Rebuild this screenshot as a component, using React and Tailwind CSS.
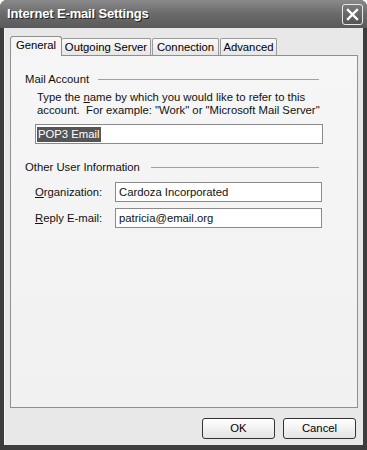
export default function App() {
  const font = { fontFamily: '"Liberation Sans", Arial, sans-serif' };
  return (
    <div className="w-[367px] h-[450px] bg-white" style={font}>
      <div className="w-[367px] h-[450px] flex flex-col bg-[#3d3d3d] rounded-t-[7px] overflow-hidden">
        {/* title bar */}
        <div className="h-[28px] flex items-center justify-between pl-[7px] pr-[4px] bg-gradient-to-b from-[#8a8a8a] via-[#6a6a6a] to-[#5a5a5a] shrink-0">
          <span className="text-white font-bold text-[13px] tracking-[-0.15px] [text-shadow:1px_1px_0_#222]">
            Internet E-mail Settings
          </span>
          <div className="w-[21px] h-[21px] rounded-[3px] border border-[#e8e8e8] bg-gradient-to-b from-[#7a7a7a] to-[#555] flex items-center justify-center">
            <svg width="13" height="13" viewBox="0 0 13 13">
              <path d="M2 2 L11 11 M11 2 L2 11" stroke="white" strokeWidth="2.4" strokeLinecap="square" />
            </svg>
          </div>
        </div>
        {/* body */}
        <div className="flex-1 mx-[4px] mb-[5px] bg-[#e8e8e8] border-l border-[#f4f4f4] flex flex-col px-[5px] pt-[8px]">
          {/* tabs */}
          <div className="flex items-end h-[19px] text-[11.3px] text-black relative z-10">
            <div className="h-[20px] w-[52px] border border-b-0 border-[#8f8f8f] rounded-t-[3px] bg-[#f5f5f5] flex items-center justify-center -mb-[1px] pb-[2px]">
              General
            </div>
            <div className="h-[17px] w-[89px] border border-b-0 border-l-0 border-[#9a9a9a] rounded-t-[2px] bg-gradient-to-b from-[#fafafa] to-[#e6e6e6] flex items-center justify-center">
              Outgoing Server
            </div>
            <div className="h-[17px] w-[67px] ml-[1px] border border-b-0 border-[#9a9a9a] rounded-t-[2px] bg-gradient-to-b from-[#fafafa] to-[#e6e6e6] flex items-center justify-center">
              Connection
            </div>
            <div className="h-[17px] w-[57px] ml-[1px] border border-b-0 border-[#9a9a9a] rounded-t-[2px] bg-gradient-to-b from-[#fafafa] to-[#e6e6e6] flex items-center justify-center">
              Advanced
            </div>
          </div>
          {/* panel */}
          <div className="w-[348px] h-[353px] border border-[#8f8f8f] bg-gradient-to-b from-[#f6f6f6] to-[#f1f1f1] text-[11.3px] text-[#111] pl-[14px] pr-[38px] pt-[16px]">
            <div className="flex items-center h-[14px]">
              <span className="whitespace-nowrap">Mail Account</span>
              <div className="ml-[9px] h-px flex-1 bg-[#a0a0a0]" />
            </div>
            <div className="pl-[12px] mt-[5px] leading-[13px] whitespace-nowrap">
              <div>Type the <u>n</u>ame by which you would like to refer to this</div>
              <div>account.&nbsp; For example: "Work" or "Microsoft Mail Server"</div>
            </div>
            <div className="ml-[10px] mt-[7px] w-[288px] h-[20px] border border-[#8a8a8a] bg-white flex items-center pl-[1px]">
              <span className="bg-[#555] text-white leading-[15px] px-[1px]">POP3 Email</span>
            </div>
            <div className="flex items-center h-[14px] mt-[16px]">
              <span className="whitespace-nowrap">Other User Information</span>
              <div className="ml-[11px] h-px flex-1 bg-[#a0a0a0]" />
            </div>
            <div className="flex items-center mt-[8px] pl-[10px] whitespace-nowrap">
              <span className="w-[80px] shrink-0"><u>O</u>rganization:</span>
              <div className="w-[207px] shrink-0 h-[20px] border border-[#8a8a8a] bg-white flex items-center pl-[3px]">
                Cardoza Incorporated
              </div>
            </div>
            <div className="flex items-center mt-[6px] pl-[10px] whitespace-nowrap">
              <span className="w-[80px] shrink-0"><u>R</u>eply E-mail:</span>
              <div className="w-[207px] shrink-0 h-[20px] border border-[#8a8a8a] bg-white flex items-center pl-[3px]">
                patricia@email.org
              </div>
            </div>
          </div>
          {/* buttons */}
          <div className="flex justify-end gap-[8px] mt-[10px] pr-[2px]">
            <button className="w-[73px] h-[21px] border border-[#333] rounded-[3px] bg-gradient-to-b from-[#ffffff] to-[#e4e4e4] text-[11.3px] text-black" style={font}>
              OK
            </button>
            <button className="w-[73px] h-[21px] border border-[#333] rounded-[3px] bg-gradient-to-b from-[#ffffff] to-[#e4e4e4] text-[11.3px] text-black" style={font}>
              Cancel
            </button>
          </div>
        </div>
      </div>
    </div>
  );
}
